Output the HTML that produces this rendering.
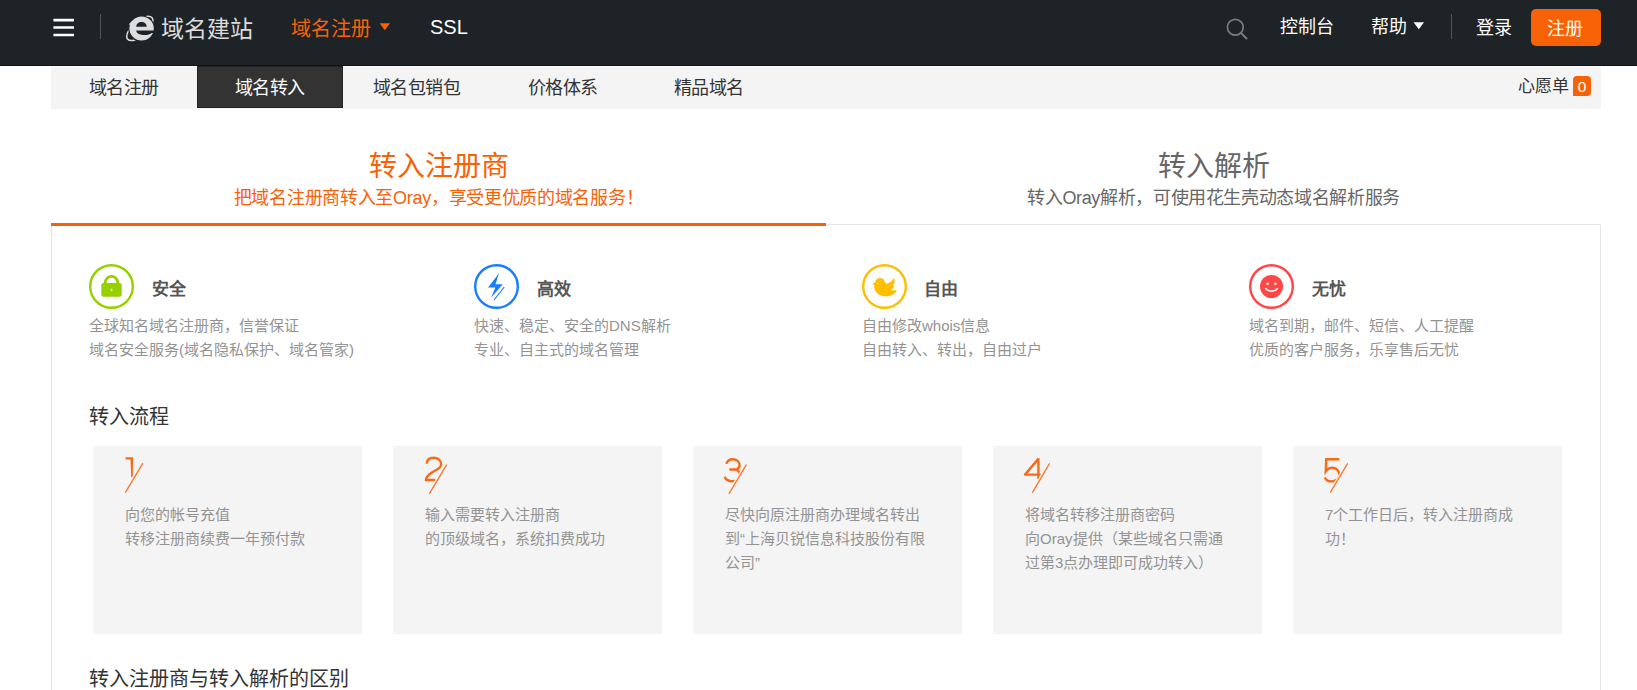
<!DOCTYPE html>
<html lang="zh-CN">
<head>
<meta charset="utf-8">
<style>
*{margin:0;padding:0;box-sizing:border-box}
html,body{width:1637px;height:690px;overflow:hidden;background:#fff;font-family:"Liberation Sans",sans-serif}
.abs{position:absolute;white-space:nowrap}
#hdr{position:absolute;left:0;top:0;width:1637px;height:66px;background:#1e2327;border-bottom:1px solid #0e1316}
#subnav{position:absolute;left:51px;top:67px;width:1550px;height:42px;background:#f4f4f4}
.tab{position:absolute;top:0;height:42px;font-size:18px;line-height:42px;color:#333;text-align:center}
#tabact{position:absolute;left:197px;top:66px;width:146px;height:42px;background:#333;border:1px solid #222;color:#fff;font-size:18px;line-height:40px;text-align:center}
</style>
</head>
<body>
<div id="hdr"></div>
<!-- hamburger -->
<svg class="abs" style="left:50px;top:15px" width="28" height="26" viewBox="0 0 28 26">
<rect x="3.4" y="3.8" width="20.6" height="2.6" rx="0.3" fill="#fff"/>
<rect x="3.4" y="11.2" width="20.6" height="2.6" rx="0.3" fill="#fff"/>
<rect x="3.4" y="18.7" width="20.6" height="2.6" rx="0.3" fill="#fff"/>
</svg>
<div class="abs" style="left:100px;top:14px;width:1px;height:25px;background:#50555a"></div>

<div class="abs" style="left:161px;top:11px;font-size:23px;line-height:36px;color:#dcdcdc">域名建站</div>
<div class="abs" style="left:291px;top:11px;font-size:20px;line-height:36px;color:#f86207">域名注册</div>
<div class="abs" style="left:430px;top:9px;font-size:20px;line-height:36px;color:#fff">SSL</div>

<div class="abs" style="left:1280px;top:9px;font-size:18px;line-height:36px;color:#fff">控制台</div>
<div class="abs" style="left:1371px;top:9px;font-size:18px;line-height:36px;color:#fff">帮助</div>
<div class="abs" style="left:1451px;top:14px;width:1px;height:25px;background:#50555a"></div>
<div class="abs" style="left:1476px;top:10px;font-size:18px;line-height:36px;color:#fff">登录</div>
<div class="abs" style="left:1531px;top:9px;width:70px;height:37px;border-radius:5px;background:#f86207"></div>
<div class="abs" style="left:1547px;top:11px;font-size:18px;line-height:37px;color:#fff">注册</div>

<div id="subnav"></div>
<div class="abs" style="left:89px;top:67px;font-size:18px;letter-spacing:-0.6px;line-height:42px;color:#333">域名注册</div>
<div id="tabact"></div>
<div class="abs" style="left:235px;top:67px;font-size:18px;letter-spacing:-0.6px;line-height:42px;color:#fff">域名转入</div>
<div class="abs" style="left:373px;top:67px;font-size:18px;letter-spacing:-0.6px;line-height:42px;color:#333">域名包销包</div>
<div class="abs" style="left:528px;top:67px;font-size:18px;letter-spacing:-0.6px;line-height:42px;color:#333">价格体系</div>
<div class="abs" style="left:674px;top:67px;font-size:18px;letter-spacing:-0.6px;line-height:42px;color:#333">精品域名</div>
<div class="abs" style="left:1518px;top:66px;font-size:17px;line-height:42px;color:#333">心愿单</div>
<div class="abs" style="left:1573px;top:76px;width:18px;height:20px;border-radius:4px 4px 4px 0;background:#f86207;color:#fff;font-size:15.5px;line-height:21px;text-align:center">0</div>


<!-- logo e -->
<svg class="abs" style="left:124px;top:12px" width="32" height="32" viewBox="0 0 32 32">
<ellipse cx="15.8" cy="16.4" rx="16.2" ry="7.4" transform="rotate(-42 15.8 16.4)" fill="none" stroke="#dedede" stroke-width="1.5"/>
<ellipse cx="17.6" cy="16.7" rx="13.4" ry="13.2" fill="#1e2327"/>
<path fill="#dedede" fill-rule="evenodd" d="M17.6 4.6a12.2 12 0 1 1 0 24a12.2 12 0 1 1 0-24z M12.3 14.8C12.3 11.9 14.6 10 17.5 10C20.4 10 22.7 11.9 22.7 14.8Z"/>
<path fill="#1e2327" d="M12.3 18.6H34V20.9H27.8C25.8 22.3 23.6 23.1 21 23.1C16 23.1 12.3 21.6 12.3 18.6Z"/>
<path fill="none" stroke="#dedede" stroke-width="1.3" d="M5.4 12.6C6.6 10.8 8.6 9.4 10.8 8.6"/>
</svg>
<!-- orange caret -->
<svg class="abs" style="left:379px;top:23px" width="12" height="8" viewBox="0 0 12 8"><path d="M0.6 0.2h10.4L5.8 7.2z" fill="#f86207"/></svg>
<!-- search -->
<svg class="abs" style="left:1222px;top:14px" width="30" height="30" viewBox="0 0 30 30">
<circle cx="13.3" cy="13.3" r="7.9" fill="none" stroke="#7a7d80" stroke-width="1.7"/>
<path d="M19.2 19.2l5.3 5.3" stroke="#7a7d80" stroke-width="1.9" stroke-linecap="round"/>
</svg>
<!-- white caret -->
<svg class="abs" style="left:1413px;top:22px" width="12" height="8" viewBox="0 0 12 8"><path d="M0.6 0.2h10.4L5.8 7.2z" fill="#fff"/></svg>

<!-- tabs -->
<div class="abs" style="left:51px;top:142px;width:775px;text-align:center;font-size:28px;line-height:50px;color:#f86207">转入注册商</div>
<div class="abs" style="left:51px;top:184px;width:775px;text-align:center;font-size:18px;letter-spacing:-0.3px;line-height:28px;color:#f86207">把域名注册商转入至Oray，享受更优质的域名服务！</div>
<div class="abs" style="left:826px;top:142px;width:775px;text-align:center;font-size:28px;line-height:50px;color:#666">转入解析</div>
<div class="abs" style="left:826px;top:184px;width:775px;text-align:center;font-size:18px;letter-spacing:-0.36px;line-height:28px;color:#666">转入Oray解析，可使用花生壳动态域名解析服务</div>
<div class="abs" style="left:51px;top:224px;width:1550px;height:1px;background:#e5e5e5"></div>
<div class="abs" style="left:51px;top:223px;width:775px;height:3px;background:#f86207"></div>
<div class="abs" style="left:51px;top:226px;width:1550px;height:470px;border:1px solid #e5e5e5;border-top:0"></div>


<!-- features -->
<svg class="abs" style="left:88px;top:263px" width="48" height="48" viewBox="0 0 48 48">
<circle cx="23.5" cy="23.5" r="21.3" fill="none" stroke="#95d000" stroke-width="2.4"/>
<path d="M17.3 21v-1.4a6.2 6.2 0 0 1 12.4 0v1.4" fill="none" stroke="#95d000" stroke-width="2.8"/>
<rect x="13.3" y="20.1" width="20.4" height="13.6" rx="2.2" fill="#95d000"/>
<rect x="22.6" y="25.6" width="1.8" height="2.6" fill="#e0f2b0"/>
</svg>
<div class="abs" style="left:152px;top:276px;font-size:17px;line-height:28px;color:#555;font-weight:bold">安全</div>
<div class="abs" style="left:89px;top:314px;font-size:15px;line-height:24px;color:#939393">全球知名域名注册商，信誉保证<br>域名安全服务(域名隐私保护、域名管家)</div>

<svg class="abs" style="left:473px;top:263px" width="48" height="48" viewBox="0 0 48 48">
<circle cx="23.5" cy="23.5" r="21.3" fill="none" stroke="#1a7dff" stroke-width="2.4"/>
<path d="M26 10.2L15 24.6h7.4l-4.3 10.2L29.7 21.2h-7.2z" fill="#1a7dff"/>
<path d="M31.2 24.2L21 37" stroke="#1a7dff" stroke-width="1.1"/>
</svg>
<div class="abs" style="left:537px;top:276px;font-size:17px;line-height:28px;color:#555;font-weight:bold">高效</div>
<div class="abs" style="left:474px;top:314px;font-size:15px;line-height:24px;color:#939393">快速、稳定、安全的DNS解析<br>专业、自主式的域名管理</div>

<svg class="abs" style="left:861px;top:263px" width="48" height="48" viewBox="0 0 48 48">
<circle cx="23.5" cy="23.5" r="21.3" fill="none" stroke="#ffbe00" stroke-width="2.4"/>
<path fill="#ffbe00" d="M11.3 20.8L14.1 19.2C14.6 16.8 16.5 15.1 18.8 15.1C21 15.1 22.8 16.2 23.6 18.2C24.2 19.8 25 20.7 26.3 20.5C29.1 19.9 31.6 17.6 33 15C33.9 17.4 33.9 19.6 33.3 21L31.5 22L33.1 23.2C32.5 25 31.3 26 29.8 26.5C31.7 27.5 33.6 27.6 35.9 27.3C34.5 30.8 30 33.4 24.6 33.4C18.4 33.4 13.4 29.4 13.2 23.6V22Z"/>
<circle cx="16.5" cy="20.4" r="0.75" fill="#fff"/>
</svg>
<div class="abs" style="left:924px;top:276px;font-size:17px;line-height:28px;color:#555;font-weight:bold">自由</div>
<div class="abs" style="left:862px;top:314px;font-size:15px;line-height:24px;color:#939393">自由修改whois信息<br>自由转入、转出，自由过户</div>

<svg class="abs" style="left:1248px;top:263px" width="48" height="48" viewBox="0 0 48 48">
<circle cx="23.5" cy="23.5" r="21.3" fill="none" stroke="#ff4646" stroke-width="2.4"/>
<circle cx="23.5" cy="23.5" r="11.5" fill="#ff4646"/>
<circle cx="19.7" cy="20.8" r="1.3" fill="#fff"/>
<circle cx="27.4" cy="20.8" r="1.3" fill="#fff"/>
<path d="M17.3 25.2a7 5.5 0 0 0 12.4 0" fill="none" stroke="#fff" stroke-width="1.5"/>
</svg>
<div class="abs" style="left:1312px;top:276px;font-size:17px;line-height:28px;color:#555;font-weight:bold">无忧</div>
<div class="abs" style="left:1249px;top:314px;font-size:15px;line-height:24px;color:#939393">域名到期，邮件、短信、人工提醒<br>优质的客户服务，乐享售后无忧</div>

<div class="abs" style="left:89px;top:402px;font-size:20px;line-height:30px;color:#333">转入流程</div>

<!-- cards -->
<div class="abs" style="left:93px;top:446px;width:269px;height:188px;background:#f4f4f4"></div>
<div class="abs" style="left:393px;top:446px;width:269px;height:188px;background:#f4f4f4"></div>
<div class="abs" style="left:693px;top:446px;width:269px;height:188px;background:#f4f4f4"></div>
<div class="abs" style="left:993px;top:446px;width:269px;height:188px;background:#f4f4f4"></div>
<div class="abs" style="left:1293px;top:446px;width:269px;height:188px;background:#f4f4f4"></div>

<!-- step numbers -->
<svg class="abs" style="left:93px;top:446px" width="70" height="60" viewBox="0 0 70 60">
<g fill="none" stroke="#f96a17" stroke-width="2.4" stroke-linecap="butt" stroke-linejoin="miter"><path d="M32.6 11.2H40.1L39.8 31.2H38.2L37.5 13.6H32.6Z" fill="#f96a17" stroke="none"/></g>
<path d="M49.6 17.7L32.6 46.2" stroke="#f4f4f4" stroke-width="4"/>
<path d="M49.6 17.7L32.6 46.2" stroke="#f97a35" stroke-width="1.4" stroke-linecap="round"/>
</svg>
<svg class="abs" style="left:393px;top:446px" width="70" height="60" viewBox="0 0 70 60">
<g fill="none" stroke="#f96a17" stroke-width="2.4" stroke-linecap="butt" stroke-linejoin="miter"><path d="M33.6 17.6C34 13.8 36.8 11.8 40.6 11.8C45 11.8 48.2 14.6 48.2 18.4C48.2 24.5 33 26 33 34H42.2"/></g>
<path d="M53.4 19.1L36.6 47.4" stroke="#f4f4f4" stroke-width="4"/>
<path d="M53.4 19.1L36.6 47.4" stroke="#f97a35" stroke-width="1.4" stroke-linecap="round"/>
</svg>
<svg class="abs" style="left:693px;top:446px" width="70" height="60" viewBox="0 0 70 60">
<g fill="none" stroke="#f96a17" stroke-width="2.4" stroke-linecap="butt" stroke-linejoin="miter"><path d="M33.3 17.8C34.5 14.8 36.8 13.3 39.6 13.3C43.6 13.3 46.6 15.6 46.6 19.2C46.6 22 44.6 23.5 41.6 23.5H36.4M41.6 23.5C45 23.5 47 26.4 47 29.4C47 32.8 43.6 35.3 39.4 35.3C35.8 35.3 32.8 33.6 31.6 30.8"/></g>
<path d="M53.1 19.1L36.2 47.4" stroke="#f4f4f4" stroke-width="4"/>
<path d="M53.1 19.1L36.2 47.4" stroke="#f97a35" stroke-width="1.4" stroke-linecap="round"/>
</svg>
<svg class="abs" style="left:993px;top:446px" width="70" height="60" viewBox="0 0 70 60">
<g fill="none" stroke="#f96a17" stroke-width="2.4" stroke-linecap="butt" stroke-linejoin="miter"><path d="M45.4 12.2V33M45.6 12.6L32 28.6H47.8" stroke-linejoin="round"/></g>
<path d="M56.3 17.8L39.7 46.2" stroke="#f4f4f4" stroke-width="4"/>
<path d="M56.3 17.8L39.7 46.2" stroke="#f97a35" stroke-width="1.4" stroke-linecap="round"/>
</svg>
<svg class="abs" style="left:1293px;top:446px" width="70" height="60" viewBox="0 0 70 60">
<g fill="none" stroke="#f96a17" stroke-width="2.4" stroke-linecap="butt" stroke-linejoin="miter"><path d="M46.3 13.3H33.2L32.8 25.4C34.4 23 36.6 21.8 39.2 21.8C43 21.8 46.2 24.6 46.2 28.6C46.2 32.6 42.6 35.4 38.6 35.4C35.4 35.4 32.8 33.6 31.8 31.4"/></g>
<path d="M54.4 17.8L37.5 46.2" stroke="#f4f4f4" stroke-width="4"/>
<path d="M54.4 17.8L37.5 46.2" stroke="#f97a35" stroke-width="1.4" stroke-linecap="round"/>
</svg>
<div class="abs" style="left:125px;top:503px;font-size:15px;line-height:24px;color:#939393">向您的帐号充值<br>转移注册商续费一年预付款</div>
<div class="abs" style="left:425px;top:503px;font-size:15px;line-height:24px;color:#939393">输入需要转入注册商<br>的顶级域名，系统扣费成功</div>
<div class="abs" style="left:725px;top:503px;font-size:15px;line-height:24px;color:#939393">尽快向原注册商办理域名转出<br>到“上海贝锐信息科技股份有限<br>公司”</div>
<div class="abs" style="left:1025px;top:503px;font-size:15px;line-height:24px;color:#939393">将域名转移注册商密码<br>向Oray提供（某些域名只需通<br>过第3点办理即可成功转入）</div>
<div class="abs" style="left:1325px;top:503px;font-size:15px;line-height:24px;color:#939393">7个工作日后，转入注册商成<br>功！</div>

<div class="abs" style="left:89px;top:664px;font-size:20px;line-height:30px;color:#333">转入注册商与转入解析的区别</div>

</body>
</html>
